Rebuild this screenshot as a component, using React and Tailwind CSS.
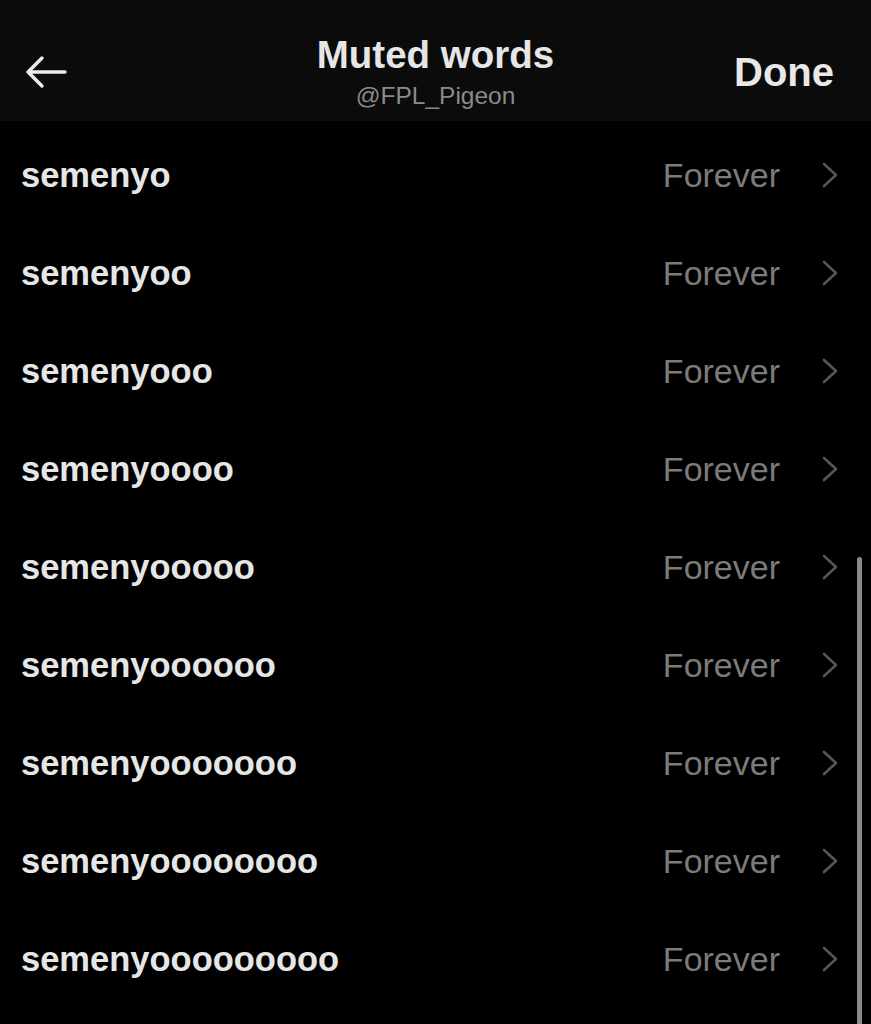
const words = [
  'semenyo',
  'semenyoo',
  'semenyooo',
  'semenyoooo',
  'semenyooooo',
  'semenyoooooo',
  'semenyooooooo',
  'semenyoooooooo',
  'semenyooooooooo',
];

const Chevron = () => (
  <svg width="16" height="26" viewBox="0 0 16 26" fill="none">
    <polyline
      points="2,2 14,13 2,24"
      stroke="#555555"
      strokeWidth="2.6"
      strokeLinecap="round"
      strokeLinejoin="round"
    />
  </svg>
);

export default function App() {
  return (
    <div
      className="relative w-[871px] h-[1024px] overflow-hidden bg-black"
      style={{ fontFamily: '"Liberation Sans", Arial, sans-serif' }}
    >
      <header className="grid grid-cols-[1fr_auto_1fr] items-center h-[121px] pt-[22px] bg-[#0b0b0b]">
        <div className="pl-[25px]">
          <svg width="42" height="34" viewBox="0 0 42 34" fill="none">
            <path
              d="M40 17H3M17 3L3 17l14 14"
              stroke="#ececec"
              strokeWidth="3.4"
              strokeLinecap="round"
              strokeLinejoin="round"
            />
          </svg>
        </div>
        <div className="flex flex-col items-center">
          <h1 className="text-[38.5px] leading-[46px] font-bold text-[#e6e6e6]">
            Muted words
          </h1>
          <p className="text-[24.5px] leading-[30px] mt-[3px] text-[#8a8a8a]">@FPL_Pigeon</p>
        </div>
        <div className="flex justify-end pr-[37px]">
          <span className="text-[40px] leading-none font-bold text-[#e8e8e8]">Done</span>
        </div>
      </header>

      <ul className="pt-[5px]">
        {words.map((w) => (
          <li key={w} className="flex items-center h-[98px] pl-[21px] pr-[33px]">
            <span className="flex-1 text-[34.5px] font-bold text-[#e6e6e6] pt-[2px]">{w}</span>
            <span className="text-[34px] text-[#7b7b7b] mr-[42px]">Forever</span>
            <Chevron />
          </li>
        ))}
      </ul>

      <div className="absolute right-[9px] top-[557px] w-[5px] h-[480px] rounded-full bg-[#8a8a8a]" />
    </div>
  );
}
